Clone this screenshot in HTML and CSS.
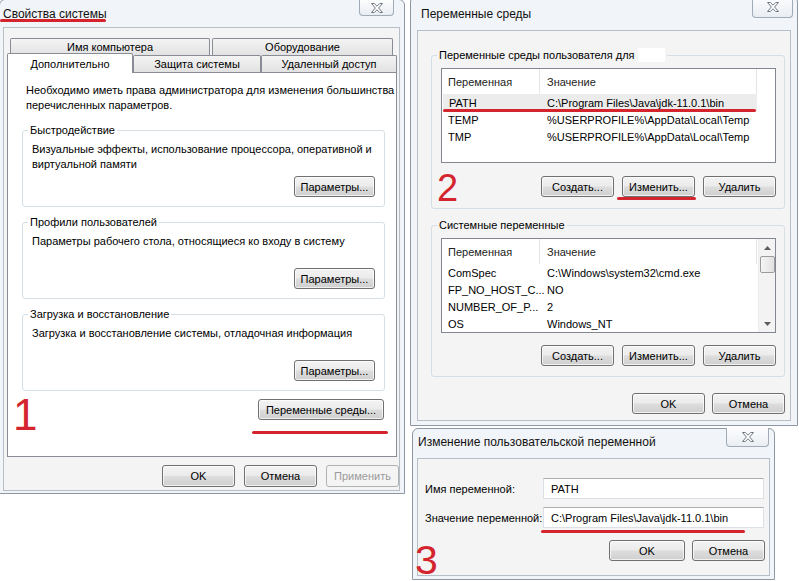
FILE: index.html
```html
<!DOCTYPE html>
<html lang="ru">
<head>
<meta charset="utf-8">
<title>Переменные среды</title>
<link rel="stylesheet" href="styles.css">
</head>
<body>

<div class="win w1">
  <div class="titlebar">
    <span class="title">Свойства системы</span>
    <span class="close"><svg width="12" height="10" viewBox="0 0 12 10"><polygon points="0.5,0.5 3.3,0.5 6,3.2 8.7,0.5 11.5,0.5 7.6,5 11.5,9.5 8.7,9.5 6,6.8 3.3,9.5 0.5,9.5 4.4,5" fill="#fff" stroke="#6f7884" stroke-width="1" stroke-linejoin="round"/></svg></span>
  </div>
  <div class="client">
    <div class="tabrow row1">
      <div class="tab t-name">Имя компьютера</div>
      <div class="tab t-hw">Оборудование</div>
    </div>
    <div class="tabrow row2">
      <div class="tab sel t-adv">Дополнительно</div>
      <div class="tab t-prot">Защита системы</div>
      <div class="tab t-remote">Удаленный доступ</div>
    </div>
    <div class="tabpanel">
      <p class="intro">Необходимо иметь права администратора для изменения большинства<br>перечисленных параметров.</p>
      <fieldset class="group">
        <legend>Быстродействие</legend>
        <div class="gbody">
          <p>Визуальные эффекты, использование процессора, оперативной и<br>виртуальной памяти</p>
          <button class="btn b-params">Параметры...</button>
        </div>
      </fieldset>
      <fieldset class="group">
        <legend>Профили пользователей</legend>
        <div class="gbody">
          <p>Параметры рабочего стола, относящиеся ко входу в систему</p>
          <button class="btn b-params">Параметры...</button>
        </div>
      </fieldset>
      <fieldset class="group">
        <legend>Загрузка и восстановление</legend>
        <div class="gbody">
          <p>Загрузка и восстановление системы, отладочная информация</p>
          <button class="btn b-params">Параметры...</button>
        </div>
      </fieldset>
      <div class="envrow"><button class="btn b-env">Переменные среды...</button></div>
    </div>
    <div class="footer f1">
      <button class="btn b-dlg">OK</button>
      <button class="btn b-dlg">Отмена</button>
      <button class="btn b-dlg disabled">Применить</button>
    </div>
  </div>
</div>

<div class="win w2">
  <div class="titlebar">
    <span class="title">Переменные среды</span>
    <span class="close"><svg width="12" height="10" viewBox="0 0 12 10"><polygon points="0.5,0.5 3.3,0.5 6,3.2 8.7,0.5 11.5,0.5 7.6,5 11.5,9.5 8.7,9.5 6,6.8 3.3,9.5 0.5,9.5 4.4,5" fill="#fff" stroke="#6f7884" stroke-width="1" stroke-linejoin="round"/></svg></span>
  </div>
  <div class="client">
    <fieldset class="vgroup">
      <legend>Переменные среды пользователя для <span class="redact"></span></legend>
      <div class="lv">
        <div class="lv-main">
          <div class="lv-head"><span class="c1">Переменная</span><span class="c2">Значение</span><span class="c3"></span></div>
          <div class="lv-row selrow"><span class="c1">PATH</span><span class="c2">C:\Program Files\Java\jdk-11.0.1\bin</span></div>
          <div class="lv-row"><span class="c1">TEMP</span><span class="c2">%USERPROFILE%\AppData\Local\Temp</span></div>
          <div class="lv-row"><span class="c1">TMP</span><span class="c2">%USERPROFILE%\AppData\Local\Temp</span></div>
        </div>
      </div>
      <div class="btnrow">
        <button class="btn b-v">Создать...</button>
        <button class="btn b-v">Изменить...</button>
        <button class="btn b-v">Удалить</button>
      </div>
    </fieldset>
    <fieldset class="vgroup sys">
      <legend>Системные переменные</legend>
      <div class="lv">
        <div class="lv-main">
          <div class="lv-head"><span class="c1">Переменная</span><span class="c2">Значение</span><span class="c3"></span></div>
          <div class="lv-row"><span class="c1">ComSpec</span><span class="c2">C:\Windows\system32\cmd.exe</span></div>
          <div class="lv-row"><span class="c1">FP_NO_HOST_C...</span><span class="c2">NO</span></div>
          <div class="lv-row"><span class="c1">NUMBER_OF_P...</span><span class="c2">2</span></div>
          <div class="lv-row"><span class="c1">OS</span><span class="c2">Windows_NT</span></div>
        </div>
        <div class="sbar">
          <span class="arr"><svg width="7" height="4" viewBox="0 0 7 4"><polygon points="0,4 3.5,0 7,4" fill="#5d5d5d"/></svg></span>
          <span class="thumb"></span>
          <span class="track"></span>
          <span class="arr"><svg width="7" height="4" viewBox="0 0 7 4"><polygon points="0,0 3.5,4 7,0" fill="#5d5d5d"/></svg></span>
        </div>
      </div>
      <div class="btnrow">
        <button class="btn b-v">Создать...</button>
        <button class="btn b-v">Изменить...</button>
        <button class="btn b-v">Удалить</button>
      </div>
    </fieldset>
    <div class="footer f2">
      <button class="btn b-v">OK</button>
      <button class="btn b-v">Отмена</button>
    </div>
  </div>
</div>

<div class="win w3">
  <div class="titlebar">
    <span class="title">Изменение пользовательской переменной</span>
    <span class="close"><svg width="12" height="10" viewBox="0 0 12 10"><polygon points="0.5,0.5 3.3,0.5 6,3.2 8.7,0.5 11.5,0.5 7.6,5 11.5,9.5 8.7,9.5 6,6.8 3.3,9.5 0.5,9.5 4.4,5" fill="#fff" stroke="#6f7884" stroke-width="1" stroke-linejoin="round"/></svg></span>
  </div>
  <div class="client">
    <div class="form">
      <label>Имя переменной:</label>
      <div class="field">PATH</div>
      <label>Значение переменной:</label>
      <div class="field">C:\Program Files\Java\jdk-11.0.1\bin</div>
    </div>
    <div class="footer f3">
      <button class="btn b-ok3">OK</button>
      <button class="btn b-v">Отмена</button>
    </div>
  </div>
</div>

<div class="mark m1"></div>
<div class="mark m2"></div>
<div class="mark m3"></div>
<div class="mark m4"></div>
<div class="mark m5"></div>
<div class="num n1">1</div>
<div class="num n2">2</div>
<div class="num n3">3</div>

</body>
</html>
```
FILE: styles.css
```css
* { box-sizing: border-box; }
html, body { margin: 0; padding: 0; }
body {
  width: 799px;
  height: 581px;
  position: relative;
  overflow: hidden;
  background: #fff;
  font-family: "Liberation Sans", Arial, sans-serif;
  font-size: 11px;
  color: #000;
}
p { margin: 0; white-space: nowrap; line-height: 15px; }

/* windows */
.win {
  position: absolute;
  display: flex;
  flex-direction: column;
  background: #f1f4f8;
  border: 1px solid #8e98a4;
  border-radius: 6px 6px 0 0;
}
.w1 { left: -1px; top: -1px; width: 406px; }
.w2 { left: 410px; top: -4px; width: 388px; }
.w3 { left: 412px; top: 428px; width: 363px; }

.titlebar {
  display: flex;
  justify-content: space-between;
  align-items: center;
}
.title { font-size: 12px; white-space: nowrap; color: #111; }
.w1 .titlebar { height: 27px; padding: 0 10px 0 3px; }
.w2 .titlebar { height: 33px; padding: 0 4px 0 10px; }
.w3 .titlebar { height: 29px; padding: 0 5px 4px 5px; }

.close {
  align-self: flex-start;
  display: flex;
  align-items: center;
  justify-content: center;
  border: 1px solid #a1abb8;
  border-top: none;
  border-radius: 0 0 4px 4px;
  background: linear-gradient(#fdfdfe, #e9edf2);
}
.w1 .close { width: 35px; height: 16px; }
.w2 .close { width: 41px; height: 21px; }
.w3 .close { width: 43px; height: 19px; margin-top: -1px; }

.client {
  background: #f4f4f4;
  border: 1px solid #b6bec8;
}
.w1 .client { margin: 0 4px 2px 3px; padding: 10px 0 3px 3px; }
.w2 .client { margin: 0 6px 4px 6px; padding: 17px 5px 6px 13px; }
.w3 .client { margin: 0 4px 3px 4px; padding: 19px 4px 14px 7px; }

/* buttons */
.btn {
  font-family: inherit;
  font-size: 11px;
  color: #000;
  height: 21px;
  padding: 0;
  border: 1px solid #707070;
  border-radius: 3px;
  background: linear-gradient(#f3f3f3 0%, #ebebeb 48%, #dddddd 52%, #cfcfcf 100%);
  box-shadow: inset 0 0 0 1px rgba(255,255,255,0.7);
  white-space: nowrap;
}
.btn.disabled {
  color: #9a9a9a;
  border-color: #adb2b5;
  background: #f4f4f4;
  box-shadow: none;
}
.b-params { width: 81px; align-self: flex-end; margin-top: auto; }
.b-env { width: 126px; }
.b-dlg { width: 73px; height: 22px; }
.b-v { width: 73px; }
.b-ok3 { width: 76px; }

/* tabs */
.tabrow { display: flex; height: 17px; }
.row1 { margin-left: 3px; gap: 2px; }
.row2 { position: relative; z-index: 2; align-items: flex-start; }
.tab {
  height: 17px;
  border: 1px solid #898c95;
  border-bottom: none;
  border-radius: 2px 2px 0 0;
  background: linear-gradient(#f4f4f4, #e2e2e2);
  display: flex;
  align-items: center;
  justify-content: center;
  white-space: nowrap;
}
.tab.sel { height: 20px; margin-top: -2px; background: #fff; }
.t-name { width: 200px; }
.t-hw { width: 181px; }
.t-adv { width: 126px; }
.t-prot { width: 128px; }
.t-remote { width: 136px; }

.tabpanel {
  width: 390px;
  height: 385px;
  background: #fff;
  border: 1px solid #898c95;
  padding: 10px 11px 0 14px;
}
.intro { margin: 0 0 10px 4px; }

.group {
  margin: 0 0 8px 0;
  padding: 5px 9px 9px 9px;
  border: 1px solid #d5dfe5;
  border-radius: 3px;
  min-width: 0;
}
.group legend, .vgroup legend {
  padding: 0 2px;
  margin-left: -4px;
  line-height: 14px;
  white-space: nowrap;
}
.gbody {
  height: 55px;
  display: flex;
  flex-direction: column;
}
.envrow {
  display: flex;
  justify-content: flex-end;
  padding-right: 1px;
  margin-top: 6px;
}

.footer { display: flex; justify-content: flex-end; }
.f1 { gap: 9px; margin-top: 8px; padding-right: 0; }
.f2 { gap: 7px; margin-top: 16px; }
.f3 { gap: 7px; margin-top: 12px; }

/* env vars window */
.vgroup {
  width: 354px;
  margin: 0;
  padding: 6px 8px 11px 9px;
  border: 1px solid #d5dfe5;
  border-radius: 3px;
  min-width: 0;
}
.vgroup.sys { margin-top: 9px; padding-bottom: 10px; }
.btnrow {
  display: flex;
  justify-content: flex-end;
  gap: 8px;
  margin-top: 13px;
}
.sys .btnrow { margin-top: 12px; }
.redact {
  display: inline-block;
  width: 27px;
  height: 14px;
  background: #fff;
  vertical-align: top;
}
.lv {
  height: 95px;
  background: #fff;
  border: 1px solid #828790;
  display: flex;
  overflow: hidden;
}
.lv-main { flex: 1; min-width: 0; }
.lv-head { display: flex; height: 25px; align-items: stretch; color: #222; }
.lv-head span { display: flex; align-items: center; }
.lv-head .c1 { border-right: 1px solid #e3e5e8; }
.lv-head .c2 { border-right: 1px solid #e3e5e8; }
.lv-head .c3 { flex: 1; }
.c1 { width: 98px; padding-left: 6px; white-space: nowrap; }
.c2 { width: 217px; padding-left: 7px; white-space: nowrap; }
.lv-row { display: flex; height: 17px; align-items: center; }
.lv-row.selrow { background: #ececec; margin-left: 1px; width: 314px; }
.lv-row.selrow .c1 { width: 97px; }

.sbar {
  width: 17px;
  display: flex;
  flex-direction: column;
  align-items: center;
  background: #f3f3f3;
  border-left: 1px solid #ededed;
}
.arr { height: 17px; display: flex; align-items: center; justify-content: center; }
.thumb {
  width: 15px;
  height: 17px;
  border: 1px solid #9b9b9b;
  border-radius: 2px;
  background: linear-gradient(90deg, #f4f4f4, #e2e2e2);
}
.track { flex: 1; }

/* edit dialog */
.form {
  display: grid;
  grid-template-columns: 118px 221px;
  row-gap: 8px;
  align-items: center;
}
.form label { white-space: nowrap; }
.field {
  height: 21px;
  background: #fff;
  border: 1px solid #dbdfe6;
  border-top-color: #abadb3;
  padding-left: 7px;
  display: flex;
  align-items: center;
  white-space: nowrap;
}

/* red annotations */
.mark {
  position: absolute;
  height: 3px;
  background: #d4252f;
  border-radius: 2px;
}
.m1 { left: 0; top: 19px; width: 106px; }
.m2 { left: 443px; top: 109px; width: 313px; }
.m3 { left: 617px; top: 197px; width: 79px; }
.m4 { left: 252px; top: 431px; width: 136px; }
.m5 { left: 541px; top: 530px; width: 204px; }

.num {
  position: absolute;
  color: #d4252f;
  font-family: "Liberation Sans", Arial, sans-serif;
  line-height: 0.8;
}
.n1 { left: 13px; top: 397px; font-size: 44px; }
.n2 { left: 437px; top: 173px; font-size: 38px; }
.n3 { left: 415px; top: 544px; font-size: 41px; }
```
